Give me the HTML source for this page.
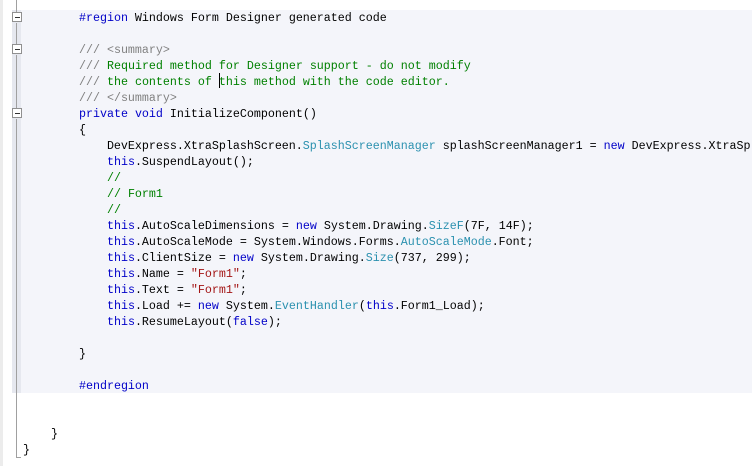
<!DOCTYPE html>
<html><head><style>
body{margin:0;width:752px;height:466px;background:#fff;position:relative;overflow:hidden;font-family:"Liberation Mono","Noto Sans CJK SC",monospace;}
.g1{position:absolute;left:0;top:0;width:3px;height:466px;background:#ececec}
.sh{position:absolute;left:12px;top:10px;width:740px;height:383px;background:#f4f5fa}
.sh2{position:absolute;left:12px;top:10px;width:9px;height:383px;background:#e6e8ef}
.vl{position:absolute;left:16px;width:1px;background:#a0a0a0}
.box{position:absolute;left:12px;width:8px;height:8px;border:1px solid #909090;background:#fff}
.box:after{content:"";position:absolute;left:2px;top:4px;width:5px;height:1px;background:#333}
pre{position:absolute;left:23px;top:10px;margin:0;font-family:inherit;font-size:11.67px;line-height:16px;color:#000;white-space:pre;width:729px;overflow:hidden}
.k{color:#0000c8}.t{color:#2b91af}.c{color:#008000}.x{color:#808080}.s{color:#a31515}
</style></head><body>
<div class="g1"></div>
<div class="sh"></div><div class="sh2"></div>
<div class="vl" style="top:0;height:12px"></div>
<div class="vl" style="top:23px;height:21px"></div>
<div class="vl" style="top:55px;height:53px"></div>
<div class="vl" style="top:119px;height:339px"></div>
<div class="vl" style="top:457px;left:17px;width:4px;height:1px"></div>
<div class="box" style="top:12px"></div>
<div class="box" style="top:44px"></div>
<div class="box" style="top:108px"></div>
<pre>        <span class="k">#region</span> Windows Form Designer generated code

        <span class="x">/// &lt;summary&gt;</span>
        <span class="x">///</span><span class="c"> Required method for Designer support - do not modify</span>
        <span class="x">///</span><span class="c"> the contents of this method with the code editor.</span>
        <span class="x">/// &lt;/summary&gt;</span>
        <span class="k">private</span> <span class="k">void</span> InitializeComponent()
        {
            DevExpress.XtraSplashScreen.<span class="t">SplashScreenManager</span> splashScreenManager1 = <span class="k">new</span> DevExpress.XtraSp
            <span class="k">this</span>.SuspendLayout();
            <span class="c">//</span>
            <span class="c">// Form1</span>
            <span class="c">//</span>
            <span class="k">this</span>.AutoScaleDimensions = <span class="k">new</span> System.Drawing.<span class="t">SizeF</span>(7F, 14F);
            <span class="k">this</span>.AutoScaleMode = System.Windows.Forms.<span class="t">AutoScaleMode</span>.Font;
            <span class="k">this</span>.ClientSize = <span class="k">new</span> System.Drawing.<span class="t">Size</span>(737, 299);
            <span class="k">this</span>.Name = <span class="s">"Form1"</span>;
            <span class="k">this</span>.Text = <span class="s">"Form1"</span>;
            <span class="k">this</span>.Load += <span class="k">new</span> System.<span class="t">EventHandler</span>(<span class="k">this</span>.Form1_Load);
            <span class="k">this</span>.ResumeLayout(<span class="k">false</span>);

        }

        <span class="k">#endregion</span>


    }
}</pre>
<div style="position:absolute;left:219px;top:73px;width:1px;height:15px;background:#000"></div>
</body></html>
